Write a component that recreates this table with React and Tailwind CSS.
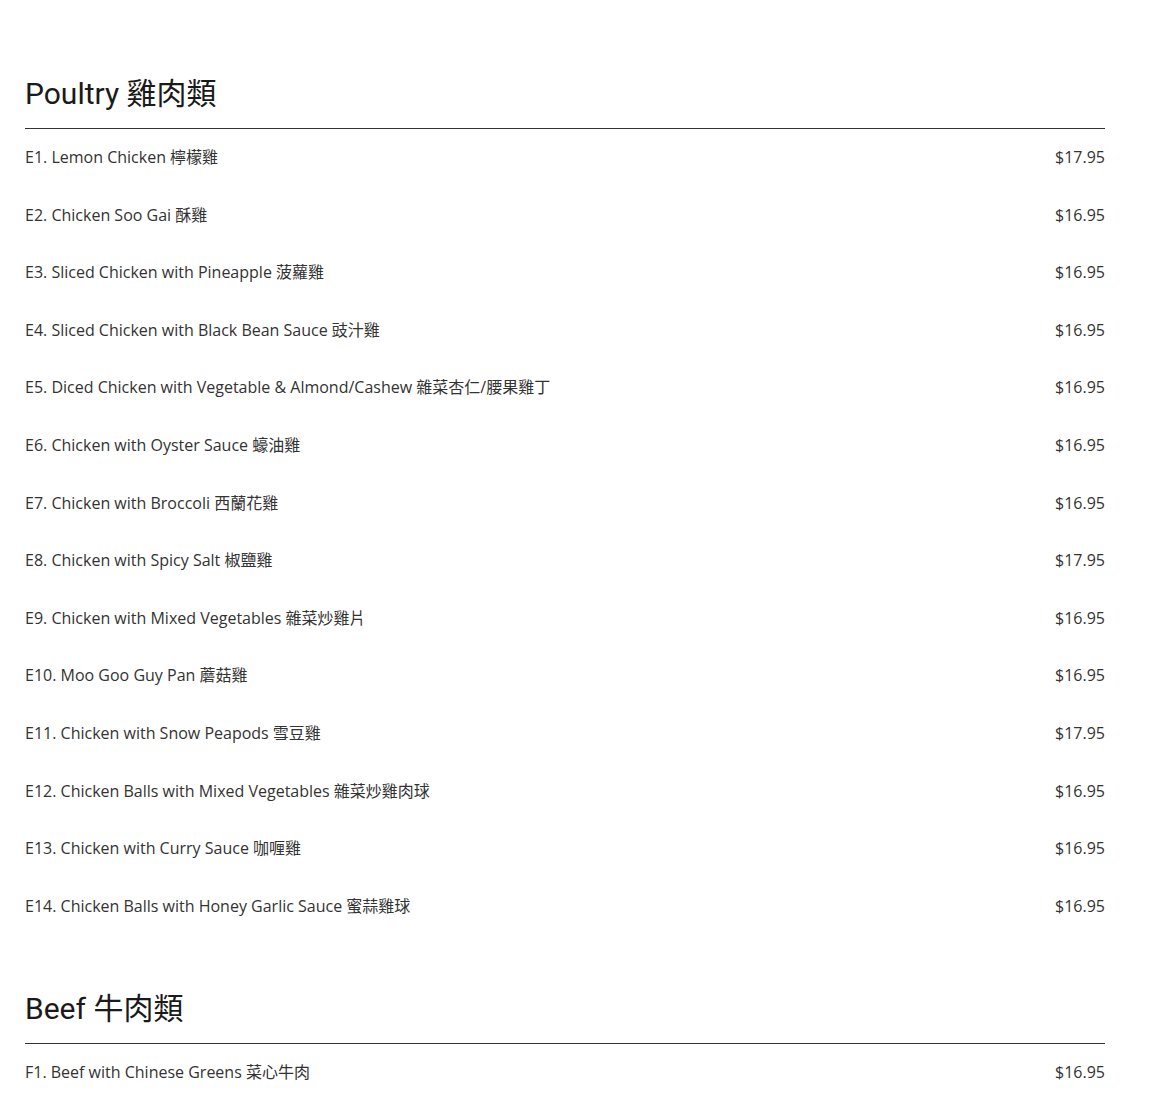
const sections = [
  {
    title: "Poultry 雞肉類",
    items: [
      { name: "E1. Lemon Chicken 檸檬雞", price: "$17.95" },
      { name: "E2. Chicken Soo Gai 酥雞", price: "$16.95" },
      { name: "E3. Sliced Chicken with Pineapple 菠蘿雞", price: "$16.95" },
      { name: "E4. Sliced Chicken with Black Bean Sauce 豉汁雞", price: "$16.95" },
      { name: "E5. Diced Chicken with Vegetable & Almond/Cashew 雜菜杏仁/腰果雞丁", price: "$16.95" },
      { name: "E6. Chicken with Oyster Sauce 蠔油雞", price: "$16.95" },
      { name: "E7. Chicken with Broccoli 西蘭花雞", price: "$16.95" },
      { name: "E8. Chicken with Spicy Salt 椒鹽雞", price: "$17.95" },
      { name: "E9. Chicken with Mixed Vegetables 雜菜炒雞片", price: "$16.95" },
      { name: "E10. Moo Goo Guy Pan 蘑菇雞", price: "$16.95" },
      { name: "E11. Chicken with Snow Peapods 雪豆雞", price: "$17.95" },
      { name: "E12. Chicken Balls with Mixed Vegetables 雜菜炒雞肉球", price: "$16.95" },
      { name: "E13. Chicken with Curry Sauce 咖喱雞", price: "$16.95" },
      { name: "E14. Chicken Balls with Honey Garlic Sauce 蜜蒜雞球", price: "$16.95" },
    ],
  },
  {
    title: "Beef 牛肉類",
    items: [{ name: "F1. Beef with Chinese Greens 菜心牛肉", price: "$16.95" }],
  },
];

function MenuRow({ item }) {
  return (
    <div className="flex items-center justify-between py-4 text-[16px] leading-[1.6] text-[#333]">
      <span>{item.name}</span>
      <span>{item.price}</span>
    </div>
  );
}

export default function App() {
  return (
    <div
      className="min-h-screen bg-white overflow-hidden"
      style={{ fontFamily: '"Open Sans", "Noto Sans CJK TC", sans-serif' }}
    >
      <div className="ml-[25px] w-[1080px]">
        {/* tail of the previous section, scrolled mostly out of view */}
        <div className="-mt-[38.6px]">
          <MenuRow item={{ name: "D12. Shrimp with Snow Peapods 雪豆蝦", price: "$19.95" }} />
        </div>

        {sections.map((section, i) => (
          <section key={section.title} className={i === 0 ? "mt-[57px]" : "mt-[56px]"}>
            <h2
              className="border-b border-[#333] pb-4 text-[30px] leading-[36px] text-[#1a1a1a]"
              style={{ fontFamily: 'Roboto, "Noto Sans CJK TC", sans-serif' }}
            >
              {section.title}
            </h2>
            <div>
              {section.items.map((item) => (
                <MenuRow key={item.name} item={item} />
              ))}
            </div>
          </section>
        ))}
      </div>
    </div>
  );
}
